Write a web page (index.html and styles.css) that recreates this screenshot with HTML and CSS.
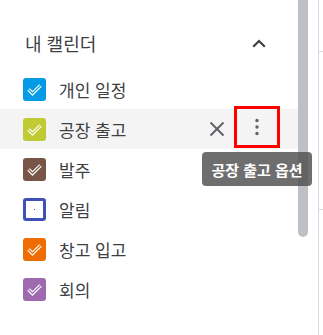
FILE: index.html
```html
<!DOCTYPE html>
<html lang="ko">
<head>
<meta charset="utf-8">
<link rel="stylesheet" href="styles.css">
</head>
<body>
<div class="app">
  <div class="sidebar">
    <div class="section-head">
      <span class="section-title">내 캘린더</span>
      <svg class="chevron" width="14" height="9" viewBox="0 0 14 9"><path d="M1.2 7.8 L7 2 L12.8 7.8" fill="none" stroke="#3c4043" stroke-width="2.2"/></svg>
    </div>
    <ul class="cal-list">
      <li class="cal-row">
        <span class="cb" style="background:#039be5"><svg viewBox="0 0 23 23"><path class="ck1" d="M5.5 11.5 L9.5 15.5 L17.5 7.5"/><path class="ck2" d="M5.5 11.5 L9.5 15.5 L17.5 7.5" stroke="#039be5"/></svg></span>
        <span class="cal-name">개인 일정</span>
      </li>
      <li class="cal-row hover">
        <span class="cb" style="background:#c0ca33"><svg viewBox="0 0 23 23"><path class="ck1" d="M5.5 11.5 L9.5 15.5 L17.5 7.5"/><path class="ck2" d="M5.5 11.5 L9.5 15.5 L17.5 7.5" stroke="#c0ca33"/></svg></span>
        <span class="cal-name">공장 출고</span>
        <span class="actions">
          <span class="icon-btn"><svg width="16" height="16" viewBox="0 0 16 16"><path d="M1.5 1.5 L14.5 14.5 M14.5 1.5 L1.5 14.5" stroke="#5f6368" stroke-width="2" fill="none"/></svg></span>
          <span class="icon-btn more"><svg width="6" height="18" viewBox="0 0 6 18"><circle cx="3" cy="2.5" r="1.7" fill="#5f6368"/><circle cx="3" cy="9" r="1.7" fill="#5f6368"/><circle cx="3" cy="15.5" r="1.7" fill="#5f6368"/></svg></span>
        </span>
        <span class="tooltip">공장 출고 옵션</span>
      </li>
      <li class="cal-row">
        <span class="cb" style="background:#795548"><svg viewBox="0 0 23 23"><path class="ck1" d="M5.5 11.5 L9.5 15.5 L17.5 7.5"/><path class="ck2" d="M5.5 11.5 L9.5 15.5 L17.5 7.5" stroke="#795548"/></svg></span>
        <span class="cal-name">발주</span>
      </li>
      <li class="cal-row">
        <span class="cb empty"><span class="dot"></span></span>
        <span class="cal-name">알림</span>
      </li>
      <li class="cal-row">
        <span class="cb" style="background:#ef6c00"><svg viewBox="0 0 23 23"><path class="ck1" d="M5.5 11.5 L9.5 15.5 L17.5 7.5"/><path class="ck2" d="M5.5 11.5 L9.5 15.5 L17.5 7.5" stroke="#ef6c00"/></svg></span>
        <span class="cal-name">창고 입고</span>
      </li>
      <li class="cal-row">
        <span class="cb" style="background:#9e69af"><svg viewBox="0 0 23 23"><path class="ck1" d="M5.5 11.5 L9.5 15.5 L17.5 7.5"/><path class="ck2" d="M5.5 11.5 L9.5 15.5 L17.5 7.5" stroke="#9e69af"/></svg></span>
        <span class="cal-name">회의</span>
      </li>
    </ul>
  </div>
  <div class="scroll-track"><div class="scroll-thumb"></div></div>
  <div class="gutter"></div>
  <div class="main-edge">
    <div class="hline first"></div>
    <div class="hline second"></div>
  </div>
</div>
</body>
</html>
```
FILE: styles.css
```css
html, body {
  margin: 0;
  padding: 0;
  background: #fff;
}
body {
  width: 323px;
  height: 335px;
  overflow: hidden;
  font-family: "Noto Sans CJK KR", "Noto Sans", Roboto, sans-serif;
  color: #3c4043;
}
.app {
  display: flex;
  height: 335px;
}
.sidebar {
  width: 298px;
  flex: none;
  padding-top: 23px;
}
.section-head {
  height: 40px;
  display: flex;
  align-items: center;
  justify-content: space-between;
  padding-left: 25px;
  padding-right: 32px;
  margin-bottom: 6px;
}
.section-title {
  font-size: 18px;
  color: #3c4043;
}
.chevron {
  display: block;
}
.cal-list {
  list-style: none;
  margin: 0;
  padding: 0;
}
.cal-row {
  position: relative;
  height: 40px;
  display: flex;
  align-items: center;
  padding-left: 23px;
  padding-right: 21px;
}
.cal-row.hover {
  background: #f4f4f4;
}
.cb {
  width: 23px;
  height: 23px;
  border-radius: 3px;
  flex: none;
  display: flex;
  align-items: center;
  justify-content: center;
  box-sizing: border-box;
}
.cb svg {
  width: 23px;
  height: 23px;
  display: block;
}
.ck1 {
  fill: none;
  stroke: #fff;
  stroke-width: 3.6;
}
.ck2 {
  fill: none;
  stroke-width: 1.2;
}
.cb.empty {
  border: 3px solid #3f51b5;
  background: #fff;
}
.dot {
  width: 1px;
  height: 1px;
  background: #3f51b5;
}
.cal-name {
  margin-left: 13px;
  font-size: 17px;
  flex: 1;
}
.actions {
  display: flex;
  align-items: center;
}
.icon-btn {
  width: 40px;
  height: 40px;
  display: flex;
  align-items: center;
  justify-content: center;
}
.icon-btn.more {
  height: 36px;
  margin-top: -4px;
  outline: 3px solid #ff0000;
}
.tooltip {
  position: absolute;
  left: 202px;
  top: 43px;
  width: 110px;
  height: 34px;
  border-radius: 4px;
  background: rgba(78, 78, 78, 0.82);
  color: #fff;
  font-size: 15px;
  font-weight: 700;
  display: flex;
  align-items: center;
  justify-content: center;
  z-index: 5;
}
.scroll-track {
  width: 10px;
  flex: none;
}
.scroll-thumb {
  height: 237px;
  background: #bdc1c6;
  border-radius: 0 0 5px 5px;
}
.gutter {
  width: 10px;
  flex: none;
}
.main-edge {
  flex: 1;
  border-left: 1px solid #dadce0;
}
.hline {
  height: 1px;
  background: #dadce0;
}
.hline.first {
  margin-top: 51px;
}
.hline.second {
  margin-top: 157px;
}
```
